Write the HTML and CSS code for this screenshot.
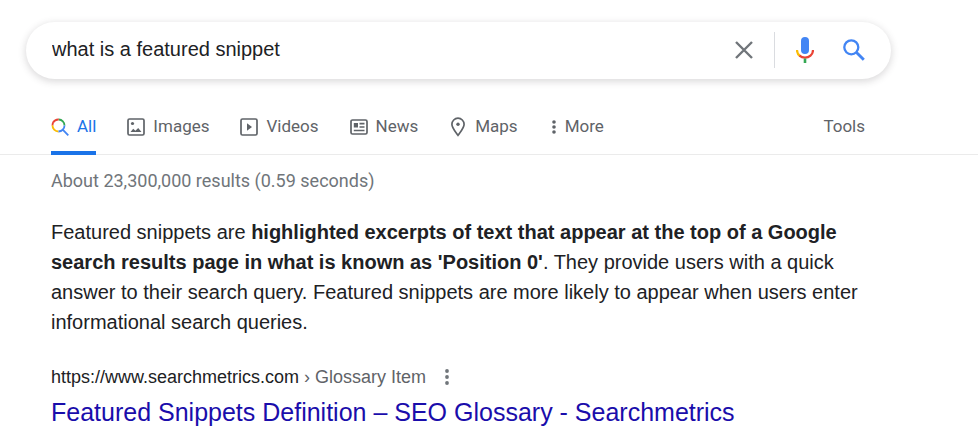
FILE: index.html
```html
<!DOCTYPE html>
<html lang="en">
<head>
<meta charset="utf-8">
<meta name="viewport" content="width=device-width, initial-scale=1">
<title>what is a featured snippet - Search</title>
<link rel="stylesheet" href="styles.css">
</head>
<body>
<header>
  <form class="search" role="search">
    <input class="query" type="text" aria-label="Search" value="what is a featured snippet">
    <button class="tool clear" type="reset" aria-label="Clear">
      <svg width="18" height="18" viewBox="0 0 18 18"><path d="M1 1L17 17M17 1L1 17" stroke="#70757a" stroke-width="2.4" fill="none"/></svg>
    </button>
    <button class="tool voice" type="button" aria-label="Search by voice">
      <svg width="18" height="26" viewBox="0 0 18 26"><rect x="5" y="0" width="8" height="17" rx="4" fill="#4285f4"/><path d="M1 13C1 15.500 2.200 17.700 4 19" stroke="#fbbc04" stroke-width="2.200" fill="none"/><path d="M3.500 18.600C6.500 21.400 11.500 21.400 14.500 18.600C16.200 17.200 17 15.200 17 13" stroke="#ea4335" stroke-width="2.200" fill="none"/><path d="M9 21.500V26" stroke="#34a853" stroke-width="2.600"/></svg>
    </button>
    <button class="tool submit" type="submit" aria-label="Search">
      <svg width="22" height="22" viewBox="0 0 22 22" fill="none" stroke="#4285f4"><circle cx="8.300" cy="8.300" r="7" stroke-width="2.300"/><path d="M13.500 13.500L20.800 20.800" stroke-width="2.900"/></svg>
    </button>
  </form>
  <nav class="tabs">
    <a class="tab active" href="#all">
      <svg width="18" height="18" viewBox="0 0 18 18" fill="none" stroke-width="1.800"><path d="M2.110 4.550A6 6 0 0 1 7.800 1.500" stroke="#ea4335"/><path d="M7.800 1.500A6 6 0 0 1 13.500 7.500" stroke="#34a853"/><path d="M2.300 4.300A6 6 0 0 0 1.500 7.500" stroke="#ea4335"/><path d="M1.500 7.200A6 6 0 0 0 7.500 13.500" stroke="#fbbc04"/><path d="M13.500 7.500A6 6 0 0 1 7.500 13.500M11.700 11.700L17.300 17.300" stroke="#4285f4"/></svg>
      <span>All</span></a>
    <a class="tab" href="#images">
      <svg width="18" height="18" viewBox="0 0 18 18"><rect x="1" y="1" width="16" height="16" rx="1.500" fill="none" stroke="#5f6368" stroke-width="1.700"/><circle cx="5.500" cy="5.500" r="1.600" fill="#5f6368"/><path d="M3.500 14L6.200 10.800L8.400 12.700L11.200 10L14.500 14Z" fill="#5f6368"/></svg>
      <span>Images</span></a>
    <a class="tab" href="#videos">
      <svg width="18" height="18" viewBox="0 0 18 18"><rect x="1" y="1" width="16" height="16" rx="1.500" fill="none" stroke="#5f6368" stroke-width="1.700"/><path d="M7 5.200V12.800L12 9Z" fill="#5f6368"/></svg>
      <span>Videos</span></a>
    <a class="tab" href="#news">
      <svg width="18" height="18" viewBox="0 0 18 18"><rect x="1" y="2" width="16" height="14" rx="1.500" fill="none" stroke="#5f6368" stroke-width="1.700"/><path d="M3.800 5H8V9.500H3.800Z" fill="#5f6368"/><path d="M9.500 5.600H14.500M9.500 9H14.500M3.800 12.500H14.500" stroke="#5f6368" stroke-width="1.600"/></svg>
      <span>News</span></a>
    <a class="tab" href="#maps">
      <svg width="18" height="20" viewBox="0 0 18 20"><path d="M9 18.300C7 15.300 2.900 11.200 2.900 7.300A6.100 6.100 0 0 1 15.100 7.300C15.100 11.200 11 15.300 9 18.300Z" fill="none" stroke="#5f6368" stroke-width="1.700"/><circle cx="9" cy="7.300" r="1.700" fill="#5f6368"/></svg>
      <span>Maps</span></a>
    <button class="tab more" type="button">
      <svg width="8" height="14" viewBox="0 0 8 14" fill="#5f6368"><circle cx="5" cy="2" r="1.800"/><circle cx="5" cy="7" r="1.800"/><circle cx="5" cy="12" r="1.800"/></svg>
      <span>More</span></button>
    <button class="tab tools" type="button">Tools</button>
  </nav>
</header>
<main>
  <p class="stats">About 23,300,000 results (0.59 seconds)</p>
  <p class="snippet">Featured snippets are <b>highlighted excerpts of text that appear at the top of a Google search results page in what is known as 'Position 0'</b>. They provide users with a quick answer to their search query. Featured snippets are more likely to appear when users enter informational search queries.</p>
  <div class="source">
    <cite>https://www.searchmetrics.com<span> › Glossary Item</span></cite>
    <button class="about" type="button" aria-label="About this result">
      <svg width="4" height="16" viewBox="0 0 4 16" fill="#70757a"><circle cx="2" cy="2" r="1.900"/><circle cx="2" cy="8" r="1.900"/><circle cx="2" cy="14" r="1.900"/></svg>
    </button>
  </div>
  <h3><a href="#result">Featured Snippets Definition – SEO Glossary - Searchmetrics</a></h3>
</main>
</body>
</html>
```
FILE: styles.css
```css
* {
  box-sizing: border-box;
}

body {
  margin: 0;
  background: #fff;
  color: #202124;
  font-family: "Liberation Sans", Arial, sans-serif;
}

button {
  border: 0;
  padding: 0;
  background: none;
  font: inherit;
  color: inherit;
  cursor: pointer;
}

a {
  text-decoration: none;
}

svg {
  display: block;
  flex: none;
}

header {
  padding-top: 22px;
  border-bottom: 1px solid #ebebeb;
}

.search {
  display: flex;
  align-items: center;
  max-width: 865px;
  height: 57px;
  margin: 0 26px;
  padding: 0 26px 2px;
  border-radius: 29px;
  box-shadow: 0 2px 7px 1px rgba(64, 60, 67, 0.18);
}

.query {
  flex: 1;
  min-width: 0;
  border: 0;
  padding: 0;
  outline: 0;
  background: none;
  color: #202124;
  font: 20px "Liberation Sans", Arial, sans-serif;
}

.tool {
  display: flex;
  align-items: center;
  height: 36px;
}

.clear {
  padding-right: 21px;
  border-right: 1px solid #dadce0;
}

.voice {
  padding: 0 29px 0 21px;
}

.tabs {
  display: flex;
  gap: 31px;
  max-width: 865px;
  height: 75px;
  padding-left: 51px;
  color: #5f6368;
  font: 17px Roboto, sans-serif;
}

.tab {
  display: flex;
  align-items: center;
  gap: 8px;
  padding-top: 22px;
  border-bottom: 4px solid transparent;
  margin-bottom: -1px;
  color: #5f6368;
}

.tab svg {
  margin-top: 2px;
}

.active {
  border-color: #1a73e8;
  color: #1a73e8;
}

.tools {
  margin-left: auto;
}

main {
  max-width: 878px;
  padding: 16px 0 16px 51px;
}

.stats {
  margin: 0 0 26px;
  color: #70757a;
  font: 18px/20px Roboto, sans-serif;
}

.snippet {
  margin: 0 0 28px;
  font-size: 20px;
  line-height: 30px;
}

.source {
  display: flex;
  align-items: center;
  gap: 19px;
  line-height: 24px;
}

cite {
  font-size: 18px;
  font-style: normal;
}

cite span {
  color: #5f6368;
}

h3 {
  margin: 7px 0 0;
  font-size: 25px;
  font-weight: 400;
  line-height: 32px;
}

h3 a {
  color: #1a0dab;
}
```
